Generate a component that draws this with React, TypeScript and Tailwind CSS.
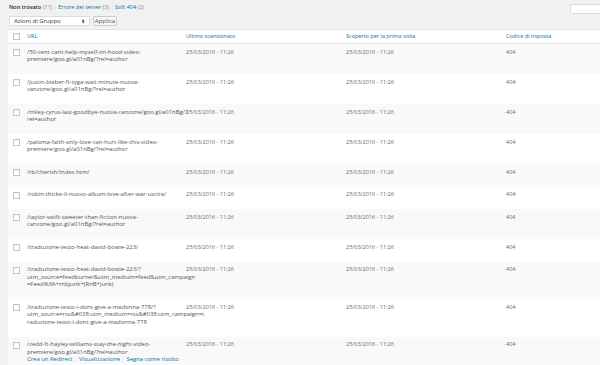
import { Fragment } from "react";

interface NotFoundRow {
  lines: string[];
  actions?: boolean;
}

const rows: NotFoundRow[] = [
  { lines: ["/50-cent-cant-help-myself-im-hood-video-", "premiere/goo.gl/a01nBg/?rel=author"] },
  { lines: ["/justin-bieber-ft-tyga-wait-minute-nuova-", "canzone/goo.gl/a01nBg/?rel=author"] },
  { lines: ["/miley-cyrus-last-goodbye-nuova-canzone/goo.gl/a01nBg/?", "rel=author"] },
  { lines: ["/paloma-faith-only-love-can-hurt-like-this-video-", "premiere/goo.gl/a01nBg/?rel=author"] },
  { lines: ["/rb/cherish/index.htm/"] },
  { lines: ["/robin-thicke-il-nuovo-album-love-after-war-uscira/"] },
  { lines: ["/taylor-swift-sweeter-than-fiction-nuova-", "canzone/goo.gl/a01nBg/?rel=author"] },
  { lines: ["/traduzione-testo-heat-david-bowie-223/"] },
  {
    lines: [
      "/traduzione-testo-heat-david-bowie-223/?",
      "utm_source=feedburner&utm_medium=feed&utm_campaign",
      "=Feed%3A+rnbjunk+(RnB+Junk)",
    ],
  },
  {
    lines: [
      "/traduzione-testo-i-dont-give-a-madonna-778/?",
      "utm_source=rss&#038;utm_medium=rss&#038;utm_campaign=t",
      "raduzione-testo-i-dont-give-a-madonna-778",
    ],
  },
  {
    lines: ["/zedd-ft-hayley-williams-stay-the-night-video-", "premiere/goo.gl/a01nBg/?rel=author"],
    actions: true,
  },
];

const date = "25/03/2016 - 11:26";

const Checkbox = () => (
  <span className="block w-[7px] h-[7px] bg-white border border-[#c3c7cb] shadow-[inset_0_1px_1px_rgba(0,0,0,0.06)]" />
);

const App = () => {
  return (
    <div
      className="w-[600px] h-[365px] overflow-hidden bg-[#f1f1f1] text-[#666] text-[5.5px]"
      style={{ fontFamily: '"Open Sans", "Liberation Sans", sans-serif' }}
    >
      {/* filter links + search */}
      <div className="flex items-center justify-between pt-[2px] h-[12px]">
        <div className="pl-[9px] flex items-center gap-[1.5px] leading-[10px]">
          <span className="font-semibold text-[#23282d]">Non trovato</span>
          <span className="text-[#888]">(11)</span>
          <span className="text-[#ccc]">|</span>
          <span className="text-[#0073aa]">Errore del server</span>
          <span className="text-[#888]">(3)</span>
          <span className="text-[#ccc]">|</span>
          <span className="text-[#0073aa]">Soft 404</span>
          <span className="text-[#888]">(2)</span>
        </div>
        <div className="w-[30px] h-[10px] mt-[4px] bg-white border border-r-0 border-[#ddd] rounded-l-[2px]" />
      </div>

      {/* bulk actions */}
      <div className="flex items-center gap-[3px] pl-[9px] mt-[4px] h-[10px] text-[6px]">
        <div className="w-[81px] h-[10px] bg-white border border-[#ddd] flex items-center justify-between px-[4px] text-[#32373c]">
          <span>Azioni di Gruppo</span>
          <span className="text-[5px] leading-none">⬍</span>
        </div>
        <div className="w-[24px] h-[10px] bg-[#f7f7f7] border border-[#ccc] rounded-[2px] flex items-center justify-center text-[#555]">
          Applica
        </div>
      </div>

      {/* table */}
      <div className="ml-[8px] mt-[3px] bg-white border-t border-[#e5e5e5]">
        <div className="grid grid-cols-[19px_159px_160px_160px_1fr] h-[14px] items-center border-b border-[#e1e1e1] text-[#0073aa] leading-[7.5px]">
          <div className="pl-[5px]">
            <Checkbox />
          </div>
          <div>URL</div>
          <div>Ultimo scansionato</div>
          <div>Scoperto per la prima volta</div>
          <div>Codice di risposta</div>
        </div>

        {rows.map((row, index) => (
          <div
            key={index}
            className={`grid grid-cols-[19px_159px_160px_160px_1fr] pt-[4.5px] pb-[3px] leading-[7.5px] ${
              index % 2 === 0 ? "bg-[#f9f9f9]" : "bg-white"
            }`}
          >
            <div className="pl-[5px] pt-[0.5px]">
              <Checkbox />
            </div>
            <div className="whitespace-nowrap text-[5.9px] text-[#555]">
              {row.lines.map((line, i) => (
                <span key={i} className="block">
                  {line}
                </span>
              ))}
              {row.actions ? (
                <span className="block text-[#0073aa]">
                  Crea un Redirect <span className="text-[#ddd]">|</span> Visualizzazione{" "}
                  <span className="text-[#ddd]">|</span> Segna come risolto
                </span>
              ) : (
                <span className="block h-[7.5px]" />
              )}
            </div>
            <Fragment>
              <div>{date}</div>
              <div>{date}</div>
              <div>404</div>
            </Fragment>
          </div>
        ))}
      </div>
    </div>
  );
};

export default App;
